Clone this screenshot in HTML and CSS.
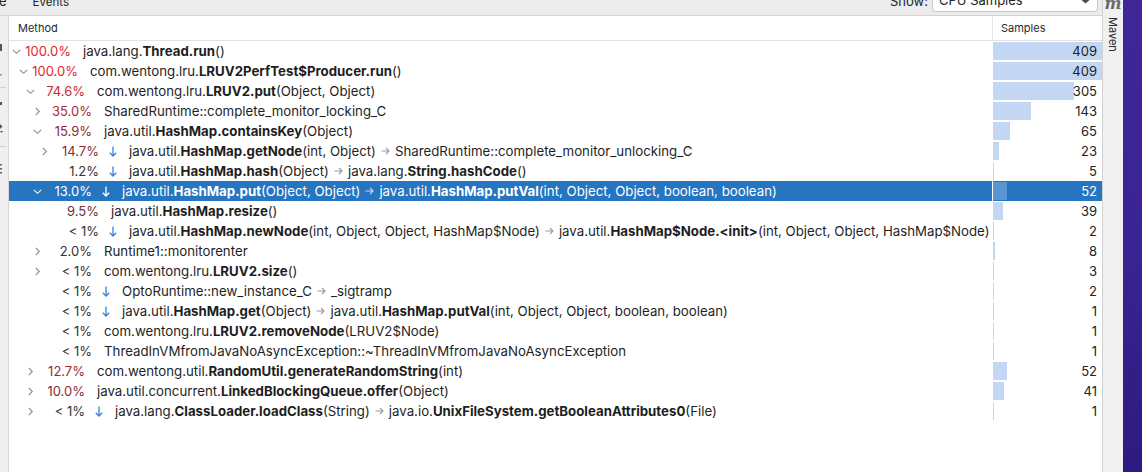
FILE: index.html
```html
<!DOCTYPE html>
<html>
<head>
<meta charset="utf-8">
<link rel="stylesheet" href="styles.css">
</head>
<body>
<div class="app">
  <div class="main">
    <div class="topbar">
      <span class="tab tab-prev">e</span>
      <span class="tab tab-events">Events</span>
      <span class="grow"></span>
      <span class="tab show-lbl">Show:</span>
      <div class="select"><span class="select-txt">CPU Samples</span><svg class="select-arrow" width="9" height="4" viewBox="0 0 9 4"><path d="M0.5 0 L4.5 3.5 L8.5 0 Z" fill="#4a4a4a"/></svg></div>
    </div>
    <div class="body">
      <div class="leftstrip">
        <svg width="8" height="170" viewBox="0 0 8 170">
          <rect x="0" y="12" width="2" height="7" fill="#555"/>
          <rect x="0" y="42" width="2" height="1.5" fill="#999"/>
          <rect x="0" y="55" width="6" height="1" fill="#cfcfcf"/>
          <rect x="0" y="70" width="2" height="3" fill="#555"/>
          <path d="M0 92 L2.5 94.5 L0 97 Z" fill="#555"/>
          <path d="M0 99 L3 99 L1.5 101 Z" fill="#555"/>
          <rect x="0" y="114" width="6" height="1" fill="#cfcfcf"/>
          <rect x="0" y="132" width="2" height="1.5" fill="#666"/>
          <rect x="0" y="136" width="2" height="1.5" fill="#666"/>
          <rect x="0" y="140" width="2" height="1.5" fill="#666"/>
        </svg>
      </div>
      <div class="table">
        <div class="thead">
          <div class="th th-method">Method</div>
          <div class="th th-samples">Samples</div>
        </div>

        <div class="row">
          <div class="mcell"><span class="chev lvl0"><svg width="9" height="9" viewBox="0 0 9 9"><polyline points="0.8,2.8 4.5,6.3 8.2,2.8"/></svg></span><span class="pct" style="color:#e3262d">100.0%</span><span class="txt">java.lang.<b>Thread.run</b>()</span></div>
          <div class="scell"><span class="bar" style="width:100%"></span><span class="num">409</span></div>
        </div>

        <div class="row">
          <div class="mcell"><span class="chev lvl1"><svg width="9" height="9" viewBox="0 0 9 9"><polyline points="0.8,2.8 4.5,6.3 8.2,2.8"/></svg></span><span class="pct" style="color:#e3262d">100.0%</span><span class="txt">com.wentong.lru.<b>LRUV2PerfTest$Producer.run</b>()</span></div>
          <div class="scell"><span class="bar" style="width:100%"></span><span class="num">409</span></div>
        </div>

        <div class="row">
          <div class="mcell"><span class="chev lvl2"><svg width="9" height="9" viewBox="0 0 9 9"><polyline points="0.8,2.8 4.5,6.3 8.2,2.8"/></svg></span><span class="pct" style="color:#cc2a2f">74.6%</span><span class="txt">com.wentong.lru.<b>LRUV2.put</b>(Object, Object)</span></div>
          <div class="scell"><span class="bar" style="width:74.6%"></span><span class="num">305</span></div>
        </div>

        <div class="row">
          <div class="mcell"><span class="chev lvl3"><svg width="9" height="9" viewBox="0 0 9 9"><polyline points="2.8,0.8 6.3,4.5 2.8,8.2"/></svg></span><span class="pct" style="color:#a82a2e">35.0%</span><span class="txt">SharedRuntime::complete_monitor_locking_C</span></div>
          <div class="scell"><span class="bar" style="width:35%"></span><span class="num">143</span></div>
        </div>

        <div class="row">
          <div class="mcell"><span class="chev lvl3"><svg width="9" height="9" viewBox="0 0 9 9"><polyline points="0.8,2.8 4.5,6.3 8.2,2.8"/></svg></span><span class="pct" style="color:#922b2e">15.9%</span><span class="txt">java.util.<b>HashMap.containsKey</b>(Object)</span></div>
          <div class="scell"><span class="bar" style="width:15.9%"></span><span class="num">65</span></div>
        </div>

        <div class="row">
          <div class="mcell"><span class="chev lvl4"><svg width="9" height="9" viewBox="0 0 9 9"><polyline points="2.8,0.8 6.3,4.5 2.8,8.2"/></svg></span><span class="pct" style="color:#8e2b2e">14.7%</span><span class="dn"><svg width="8" height="11" viewBox="0 0 8 11"><path d="M4 0.5 V10 M0.8 6.8 L4 10 L7.2 6.8"/></svg></span><span class="txt">java.util.<b>HashMap.getNode</b>(int, Object)<span class="ra"><svg width="9" height="8" viewBox="0 0 9 8"><path d="M0.5 4 H8 M5 1 L8 4 L5 7"/></svg></span>SharedRuntime::complete_monitor_unlocking_C</span></div>
          <div class="scell"><span class="bar" style="width:5.6%"></span><span class="num">23</span></div>
        </div>

        <div class="row">
          <div class="mcell"><span class="chev lvl4"></span><span class="pct" style="color:#3a3030">1.2%</span><span class="dn"><svg width="8" height="11" viewBox="0 0 8 11"><path d="M4 0.5 V10 M0.8 6.8 L4 10 L7.2 6.8"/></svg></span><span class="txt">java.util.<b>HashMap.hash</b>(Object)<span class="ra"><svg width="9" height="8" viewBox="0 0 9 8"><path d="M0.5 4 H8 M5 1 L8 4 L5 7"/></svg></span>java.lang.<b>String.hashCode</b>()</span></div>
          <div class="scell"><span class="bar" style="width:1.2%"></span><span class="num">5</span></div>
        </div>

        <div class="row sel">
          <div class="mcell"><span class="chev lvl3"><svg width="9" height="9" viewBox="0 0 9 9"><polyline points="0.8,2.8 4.5,6.3 8.2,2.8"/></svg></span><span class="pct">13.0%</span><span class="dn"><svg width="8" height="11" viewBox="0 0 8 11"><path d="M4 0.5 V10 M0.8 6.8 L4 10 L7.2 6.8"/></svg></span><span class="txt">java.util.<b>HashMap.put</b>(Object, Object)<span class="ra"><svg width="9" height="8" viewBox="0 0 9 8"><path d="M0.5 4 H8 M5 1 L8 4 L5 7"/></svg></span>java.util.<b>HashMap.putVal</b>(int, Object, Object, boolean, boolean)</span></div>
          <div class="scell"><span class="bar" style="width:12.7%"></span><span class="num">52</span></div>
        </div>

        <div class="row">
          <div class="mcell"><span class="chev lvl4"></span><span class="pct" style="color:#6e3032">9.5%</span><span class="txt">java.util.<b>HashMap.resize</b>()</span></div>
          <div class="scell"><span class="bar" style="width:9.5%"></span><span class="num">39</span></div>
        </div>

        <div class="row">
          <div class="mcell"><span class="chev lvl4"></span><span class="pct">&lt; 1%</span><span class="dn"><svg width="8" height="11" viewBox="0 0 8 11"><path d="M4 0.5 V10 M0.8 6.8 L4 10 L7.2 6.8"/></svg></span><span class="txt">java.util.<b>HashMap.newNode</b>(int, Object, Object, HashMap$Node)<span class="ra"><svg width="9" height="8" viewBox="0 0 9 8"><path d="M0.5 4 H8 M5 1 L8 4 L5 7"/></svg></span>java.util.<b>HashMap$Node.&lt;init&gt;</b>(int, Object, Object, HashMap$Node)</span></div>
          <div class="scell"><span class="bar" style="width:0.5%"></span><span class="num">2</span></div>
        </div>

        <div class="row">
          <div class="mcell"><span class="chev lvl3"><svg width="9" height="9" viewBox="0 0 9 9"><polyline points="2.8,0.8 6.3,4.5 2.8,8.2"/></svg></span><span class="pct" style="color:#3c3030">2.0%</span><span class="txt">Runtime1::monitorenter</span></div>
          <div class="scell"><span class="bar" style="width:2%"></span><span class="num">8</span></div>
        </div>

        <div class="row">
          <div class="mcell"><span class="chev lvl3"><svg width="9" height="9" viewBox="0 0 9 9"><polyline points="2.8,0.8 6.3,4.5 2.8,8.2"/></svg></span><span class="pct">&lt; 1%</span><span class="txt">com.wentong.lru.<b>LRUV2.size</b>()</span></div>
          <div class="scell"><span class="bar" style="width:0.7%"></span><span class="num">3</span></div>
        </div>

        <div class="row">
          <div class="mcell"><span class="chev lvl3"></span><span class="pct">&lt; 1%</span><span class="dn"><svg width="8" height="11" viewBox="0 0 8 11"><path d="M4 0.5 V10 M0.8 6.8 L4 10 L7.2 6.8"/></svg></span><span class="txt">OptoRuntime::new_instance_C<span class="ra"><svg width="9" height="8" viewBox="0 0 9 8"><path d="M0.5 4 H8 M5 1 L8 4 L5 7"/></svg></span>_sigtramp</span></div>
          <div class="scell"><span class="bar" style="width:0.5%"></span><span class="num">2</span></div>
        </div>

        <div class="row">
          <div class="mcell"><span class="chev lvl3"></span><span class="pct">&lt; 1%</span><span class="dn"><svg width="8" height="11" viewBox="0 0 8 11"><path d="M4 0.5 V10 M0.8 6.8 L4 10 L7.2 6.8"/></svg></span><span class="txt">java.util.<b>HashMap.get</b>(Object)<span class="ra"><svg width="9" height="8" viewBox="0 0 9 8"><path d="M0.5 4 H8 M5 1 L8 4 L5 7"/></svg></span>java.util.<b>HashMap.putVal</b>(int, Object, Object, boolean, boolean)</span></div>
          <div class="scell"><span class="bar" style="width:0.2%"></span><span class="num">1</span></div>
        </div>

        <div class="row">
          <div class="mcell"><span class="chev lvl3"></span><span class="pct">&lt; 1%</span><span class="txt">com.wentong.lru.<b>LRUV2.removeNode</b>(LRUV2$Node)</span></div>
          <div class="scell"><span class="bar" style="width:0.2%"></span><span class="num">1</span></div>
        </div>

        <div class="row">
          <div class="mcell"><span class="chev lvl3"></span><span class="pct">&lt; 1%</span><span class="txt">ThreadInVMfromJavaNoAsyncException::~ThreadInVMfromJavaNoAsyncException</span></div>
          <div class="scell"><span class="bar" style="width:0.2%"></span><span class="num">1</span></div>
        </div>

        <div class="row">
          <div class="mcell"><span class="chev lvl2"><svg width="9" height="9" viewBox="0 0 9 9"><polyline points="2.8,0.8 6.3,4.5 2.8,8.2"/></svg></span><span class="pct" style="color:#962c2f">12.7%</span><span class="txt">com.wentong.util.<b>RandomUtil.generateRandomString</b>(int)</span></div>
          <div class="scell"><span class="bar" style="width:12.7%"></span><span class="num">52</span></div>
        </div>

        <div class="row">
          <div class="mcell"><span class="chev lvl2"><svg width="9" height="9" viewBox="0 0 9 9"><polyline points="2.8,0.8 6.3,4.5 2.8,8.2"/></svg></span><span class="pct" style="color:#8a2d30">10.0%</span><span class="txt">java.util.concurrent.<b>LinkedBlockingQueue.offer</b>(Object)</span></div>
          <div class="scell"><span class="bar" style="width:10%"></span><span class="num">41</span></div>
        </div>

        <div class="row">
          <div class="mcell"><span class="chev lvl2"><svg width="9" height="9" viewBox="0 0 9 9"><polyline points="2.8,0.8 6.3,4.5 2.8,8.2"/></svg></span><span class="pct">&lt; 1%</span><span class="dn"><svg width="8" height="11" viewBox="0 0 8 11"><path d="M4 0.5 V10 M0.8 6.8 L4 10 L7.2 6.8"/></svg></span><span class="txt">java.lang.<b>ClassLoader.loadClass</b>(String)<span class="ra"><svg width="9" height="8" viewBox="0 0 9 8"><path d="M0.5 4 H8 M5 1 L8 4 L5 7"/></svg></span>java.io.<b>UnixFileSystem.getBooleanAttributes0</b>(File)</span></div>
          <div class="scell"><span class="bar" style="width:0.2%"></span><span class="num">1</span></div>
        </div>

        <div class="filler"></div>
      </div>
    </div>
  </div>
  <div class="maven">
    <span class="m-logo">m</span>
    <span class="m-text">Maven</span>
  </div>
  <div class="wall"></div>
</div>
</body>
</html>
```
FILE: styles.css
```css
html, body {
  margin: 0;
  padding: 0;
  width: 1142px;
  height: 472px;
  overflow: hidden;
  background: #ffffff;
}

body {
  font-family: Inter, "Noto Sans", "Liberation Sans", sans-serif;
  font-size: 13px;
  color: #222222;
}

.app {
  display: flex;
  height: 472px;
}

.main {
  width: 1102px;
  flex: 0 0 1102px;
  display: flex;
  flex-direction: column;
}

/* top bar */
.topbar {
  height: 15px;
  border-bottom: 1px solid #d5d5d5;
  background: #ececec;
  display: flex;
  align-items: flex-end;
  overflow: hidden;
}

.tab {
  line-height: 16px;
  margin-bottom: 6px;
  color: #262626;
  white-space: nowrap;
}

.tab-prev {
  margin-left: -1px;
}

.tab-events {
  margin-left: 26px;
  font-size: 11.5px;
  margin-bottom: 5px;
}

.grow {
  flex: 1;
}

.show-lbl {
  margin-right: 4px;
}

.select {
  align-self: flex-start;
  width: 158px;
  height: 11px;
  margin-right: 4px;
  background: #ffffff;
  border: 1px solid #c6c6c6;
  border-top: none;
  border-radius: 0 0 4px 4px;
  display: flex;
  align-items: flex-end;
  overflow: hidden;
  padding-left: 6px;
  box-sizing: content-box;
}

.select-txt {
  line-height: 16px;
  margin-bottom: 3px;
  flex: 1;
  color: #262626;
}

.select-arrow {
  align-self: flex-start;
  margin-right: 7px;
}

/* body */
.body {
  flex: 1;
  display: flex;
}

.leftstrip {
  width: 8px;
  flex: 0 0 8px;
  background: #efefef;
  border-right: 1px solid #d6d6d6;
  padding-top: 16px;
}

.leftstrip svg {
  display: block;
}

.table {
  flex: 1;
  display: flex;
  flex-direction: column;
  background: #ffffff;
}

.thead {
  height: 24px;
  border-bottom: 1px solid #e2e2e2;
  display: flex;
}

.th {
  font-size: 11px;
  line-height: 24px;
  color: #2a2a2a;
}

.th-method {
  flex: 0 0 983px;
  padding-left: 9px;
  box-sizing: border-box;
}

.th-samples {
  flex: 1;
  border-left: 1px solid #e6e6e6;
  padding-left: 8px;
}

.row {
  height: 20px;
  display: flex;
}

.mcell {
  flex: 0 0 983px;
  display: flex;
  align-items: center;
  overflow: hidden;
  white-space: nowrap;
}

.chev {
  flex: 0 0 9px;
  width: 9px;
  height: 9px;
  display: flex;
}

.chev svg {
  display: block;
}

.chev polyline {
  fill: none;
  stroke: #8a8a8a;
  stroke-width: 1.1;
}

.lvl0 { margin-left: 3px; }
.lvl1 { margin-left: 10px; }
.lvl2 { margin-left: 17px; }
.lvl3 { margin-left: 24px; }
.lvl4 { margin-left: 31px; }

.pct {
  flex: 0 0 50px;
  text-align: right;
  color: #333333;
  margin-right: 12px;
}

.dn {
  flex: 0 0 8px;
  display: flex;
  margin-left: -2px;
  margin-right: 12px;
}

.dn svg {
  display: block;
}

.dn path {
  fill: none;
  stroke: #3f82d6;
  stroke-width: 1.3;
}

.txt {
  font-size: 13.25px;
  color: #1e1e1e;
}

.txt b {
  font-weight: 700;
}

.ra {
  display: inline-block;
  margin: 0 5px 0 5px;
  vertical-align: 1px;
}

.ra svg {
  display: block;
}

.ra path {
  fill: none;
  stroke: #9a9a9a;
  stroke-width: 1.1;
}

.scell {
  flex: 1;
  border-left: 1px solid #ffffff;
  display: grid;
  align-items: center;
}

.bar {
  grid-area: 1 / 1;
  justify-self: start;
  height: 18px;
  min-width: 1px;
  background: #c3d7f4;
}

.num {
  grid-area: 1 / 1;
  justify-self: end;
  padding-right: 5px;
  color: #222222;
}

/* selected row */
.row.sel {
  background: #2675c0;
}

.row.sel .pct,
.row.sel .txt,
.row.sel .num {
  color: #ffffff;
}

.row.sel .chev polyline,
.row.sel .dn path {
  stroke: #ffffff;
}

.row.sel .ra path {
  stroke: #c9dcf3;
}

.row.sel .bar {
  background: #5a95d3;
}

.filler {
  flex: 1;
}

/* maven side bar */
.maven {
  flex: 0 0 20px;
  width: 20px;
  border-left: 1px solid #d2d2d2;
  background: #f0f0f0;
  display: flex;
  flex-direction: column;
  align-items: center;
  overflow: hidden;
}

.m-logo {
  font-family: "DejaVu Serif", "Liberation Serif", serif;
  font-style: italic;
  font-weight: 700;
  font-size: 16px;
  line-height: 16px;
  margin-top: -4px;
  color: #6a6a6a;
}

.m-text {
  writing-mode: vertical-rl;
  font-size: 11px;
  margin-top: 5px;
  color: #2b2b2b;
}

.wall {
  flex: 1;
  background: linear-gradient(170deg, #3f2699 0%, #3a2392 55%, #2d1a80 100%);
}
```
